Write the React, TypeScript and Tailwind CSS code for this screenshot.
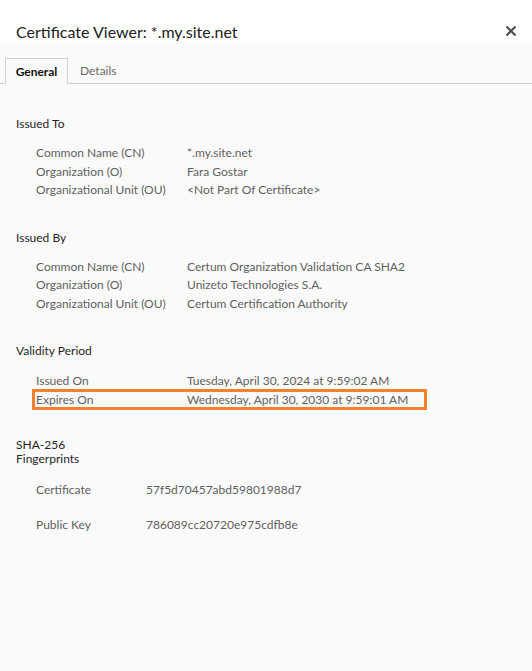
import React from "react";

const font = { fontFamily: "Lato, 'Noto Sans', sans-serif" };

function Row({ label, value, labelW = "w-[151px]" }: { label: string; value: string; labelW?: string }) {
  return (
    <div className="flex h-[18.5px] items-center">
      <div className={`${labelW} shrink-0`}>{label}</div>
      <div>{value}</div>
    </div>
  );
}

export default function App() {
  return (
    <div className="w-[532px] h-[671px] bg-[#fafafa] flex flex-col text-[12px] text-[#5f5f5f]" style={font}>
      <div className="bg-white h-[43px] shrink-0 flex items-start justify-between pl-[16px] pr-[15px] pt-[22px]">
        <div className="text-[16px] leading-[20px] text-[#202020]">Certificate Viewer: *.my.site.net</div>
        <svg width="12" height="12" viewBox="0 0 12 12" className="mt-[3px]">
          <path d="M1.5 1.5 L10.5 10.5 M10.5 1.5 L1.5 10.5" stroke="#4a4a4a" strokeWidth="2" />
        </svg>
      </div>
      <div className="mt-[15px] flex items-end border-b border-[#cfcfcf] pl-[5px] h-[26px]">
        <div className="h-[26px] w-[63px] border border-b-0 border-[#cfcfcf] bg-[#fafafa] -mb-px flex items-center justify-center font-bold text-[#111]">
          General
        </div>
        <div className="h-[25px] flex items-center pl-[12px] text-[#6b6b6b]">Details</div>
      </div>

      <div className="pl-[16px] pt-[31px]">
        <div className="text-[#1f1f1f] h-[18px] flex items-center">Issued To</div>
        <div className="pl-[20px] mt-[11px]">
          <Row label="Common Name (CN)" value="*.my.site.net" />
          <Row label="Organization (O)" value="Fara Gostar" />
          <Row label="Organizational Unit (OU)" value="<Not Part Of Certificate>" />
        </div>

        <div className="text-[#1f1f1f] h-[18px] flex items-center mt-[29px]">Issued By</div>
        <div className="pl-[20px] mt-[11px]">
          <Row label="Common Name (CN)" value="Certum Organization Validation CA SHA2" />
          <Row label="Organization (O)" value="Unizeto Technologies S.A." />
          <Row label="Organizational Unit (OU)" value="Certum Certification Authority" />
        </div>

        <div className="text-[#1f1f1f] h-[18px] flex items-center mt-[29px]">Validity Period</div>
        <div className="pl-[16px] mt-[12px] w-[411px]">
          <div className="flex h-[18px] items-center pl-[4px]">
            <div className="w-[151px] shrink-0">Issued On</div>
            <div>Tuesday, April 30, 2024 at 9:59:02 AM</div>
          </div>
          <div className="-mt-[1px] border-[3px] border-[#f5802e] h-[21px] flex items-center pl-[1px]">
            <div className="w-[151px] shrink-0">Expires On</div>
            <div>Wednesday, April 30, 2030 at 9:59:01 AM</div>
          </div>
        </div>

        <div className="text-[#1f1f1f] mt-[28px] leading-[14px]">
          SHA-256
          <br />
          Fingerprints
        </div>
        <div className="pl-[20px] mt-[15px]">
          <div className="flex h-[18px] items-center">
            <div className="w-[110px] shrink-0">Certificate</div>
            <div>57f5d70457abd59801988d7</div>
          </div>
          <div className="flex h-[18px] items-center mt-[17px]">
            <div className="w-[110px] shrink-0">Public Key</div>
            <div>786089cc20720e975cdfb8e</div>
          </div>
        </div>
      </div>
    </div>
  );
}
